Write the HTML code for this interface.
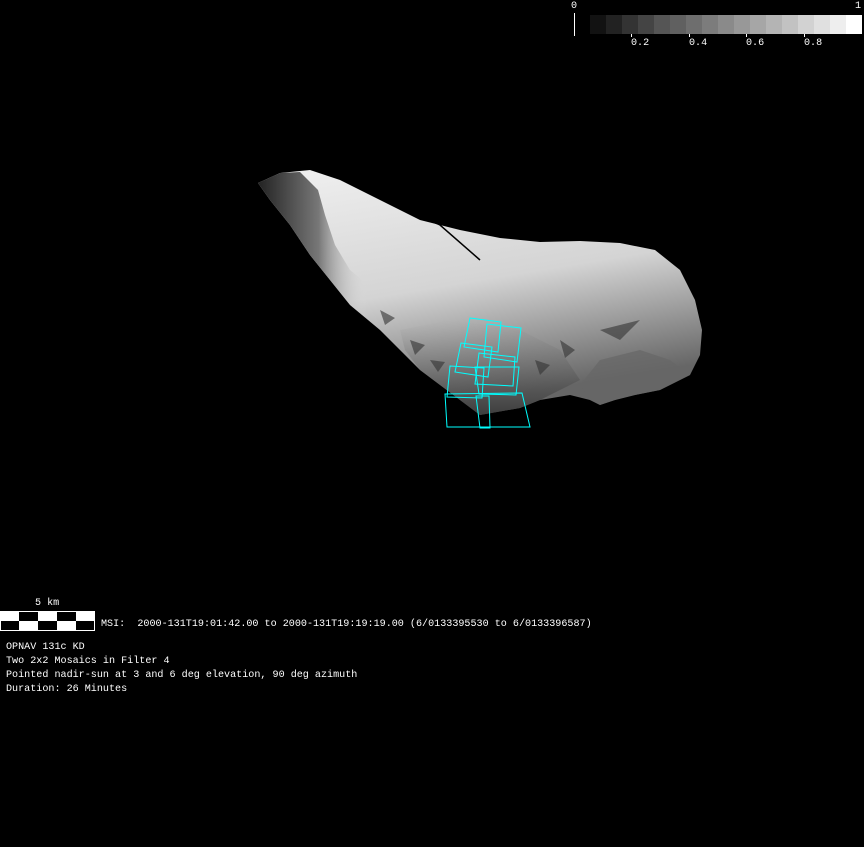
<!DOCTYPE html>
<html><head><style>
html,body{margin:0;padding:0;background:#000;width:864px;height:847px;overflow:hidden}
.t{position:absolute;color:#fff;font-family:"Liberation Mono",monospace;font-size:10.1px;white-space:pre;line-height:14px}
</style></head><body>
<svg width="864" height="847" style="position:absolute;left:0;top:0">
<defs>
<linearGradient id="ast" x1="0" y1="0" x2="0.3" y2="1">
<stop offset="0" stop-color="#f0f0f0"/>
<stop offset="0.55" stop-color="#d4d4d4"/>
<stop offset="1" stop-color="#666"/>
</linearGradient>
<linearGradient id="lft" x1="0" y1="0" x2="1" y2="0">
<stop offset="0" stop-color="#222"/>
<stop offset="0.25" stop-color="#777"/>
<stop offset="0.45" stop-color="#ddd" stop-opacity="0"/>
</linearGradient>
<linearGradient id="bot" x1="0" y1="0" x2="0" y2="1">
<stop offset="0" stop-color="#888" stop-opacity="0"/>
<stop offset="1" stop-color="#333" stop-opacity="0.8"/>
</linearGradient>
</defs>
<g>
<rect x="590" y="15" width="16" height="19" fill="#121212"/>
<rect x="606" y="15" width="16" height="19" fill="#222"/>
<rect x="622" y="15" width="16" height="19" fill="#333"/>
<rect x="638" y="15" width="16" height="19" fill="#444"/>
<rect x="654" y="15" width="16" height="19" fill="#555"/>
<rect x="670" y="15" width="16" height="19" fill="#606060"/>
<rect x="686" y="15" width="16" height="19" fill="#6e6e6e"/>
<rect x="702" y="15" width="16" height="19" fill="#7c7c7c"/>
<rect x="718" y="15" width="16" height="19" fill="#8a8a8a"/>
<rect x="734" y="15" width="16" height="19" fill="#989898"/>
<rect x="750" y="15" width="16" height="19" fill="#a6a6a6"/>
<rect x="766" y="15" width="16" height="19" fill="#b4b4b4"/>
<rect x="782" y="15" width="16" height="19" fill="#c2c2c2"/>
<rect x="798" y="15" width="16" height="19" fill="#d2d2d2"/>
<rect x="814" y="15" width="16" height="19" fill="#e0e0e0"/>
<rect x="830" y="15" width="16" height="19" fill="#eeeeee"/>
<rect x="846" y="15" width="16" height="19" fill="#fff"/>
<line x1="574.5" y1="13" x2="574.5" y2="36" stroke="#fff"/>
<line x1="631.5" y1="34" x2="631.5" y2="37" stroke="#fff"/>
<line x1="689.5" y1="34" x2="689.5" y2="37" stroke="#fff"/>
<line x1="746.5" y1="34" x2="746.5" y2="37" stroke="#fff"/>
<line x1="804.5" y1="34" x2="804.5" y2="37" stroke="#fff"/>
</g>
<polygon points="258,183 280,173 310,170 340,180 380,200 420,220 460,230 500,238 540,242 580,241 620,243 655,250 680,270 695,300 702,330 700,355 690,375 660,390 635,395 615,400 600,405 590,400 570,395 540,400 520,408 480,415 460,400 440,385 420,370 400,350 380,330 350,305 330,280 310,255 290,225 270,200" fill="url(#ast)"/>
<polygon points="258,183 280,173 300,172 318,190 325,215 335,245 350,270 380,295 420,320 450,345 480,380 500,408 480,415 460,400 440,385 420,370 400,350 380,330 350,305 330,280 310,255 290,225 270,200" fill="url(#lft)"/>
<polygon points="400,330 450,320 520,330 560,350 580,380 540,400 520,408 480,415 460,400 440,385 420,370 405,350" fill="url(#bot)"/>
<polygon points="600,360 640,350 670,360 690,375 660,390 635,395 615,400 600,405 590,400 580,385" fill="#666" opacity="0.7"/>
<g fill="#333" opacity="0.6">
<polygon points="380,310 395,318 385,325"/>
<polygon points="410,340 425,345 415,355"/>
<polygon points="430,360 445,362 438,372"/>
<polygon points="535,360 550,365 540,375"/>
<polygon points="560,340 575,350 565,358"/>
<polygon points="600,330 640,320 620,340"/>
</g>
<path d="M395,205 L440,225 L480,260" stroke="#000" stroke-width="1.5" fill="none"/>
<g fill="none" stroke="#0ff" stroke-width="1">
<polygon points="470,318 501,322 498,352 464,347"/>
<polygon points="487,324 521,328 517,362 484,357"/>
<polygon points="461,343 492,347 488,377 455,372"/>
<polygon points="479,353 515,357 513,386 475,384"/>
<polygon points="450,366 484,368 482,398 447,397"/>
<polygon points="475,367 519,367 516,395 479,394"/>
<polygon points="445,394 522,393 530,427 447,427"/>
<polygon points="476,396 489,396 490,428 480,428"/>
</g>
<rect x="0" y="611" width="95" height="20" fill="#fff"/>
<rect x="19" y="611" width="19" height="10" fill="#000"/>
<rect x="57" y="611" width="19" height="10" fill="#000"/>
<rect x="0" y="621" width="19" height="10" fill="#000"/>
<rect x="38" y="621" width="19" height="10" fill="#000"/>
<rect x="76" y="621" width="19" height="10" fill="#000"/>
<rect x="0.5" y="611.5" width="94" height="19" fill="none" stroke="#fff"/>
</svg>
<div class="t" style="left:571px;top:0px">0</div>
<div class="t" style="left:855px;top:0px">1</div>
<div class="t" style="left:631px;top:37px">0.2</div>
<div class="t" style="left:689px;top:37px">0.4</div>
<div class="t" style="left:746px;top:37px">0.6</div>
<div class="t" style="left:804px;top:37px">0.8</div>
<div class="t" style="left:35px;top:597px">5 km</div>
<div class="t" style="left:101px;top:618px">MSI:  2000-131T19:01:42.00 to 2000-131T19:19:19.00 (6/0133395530 to 6/0133396587)</div>
<div class="t" style="left:6px;top:641px">OPNAV 131c KD
Two 2x2 Mosaics in Filter 4
Pointed nadir-sun at 3 and 6 deg elevation, 90 deg azimuth
Duration: 26 Minutes</div>
</body></html>
